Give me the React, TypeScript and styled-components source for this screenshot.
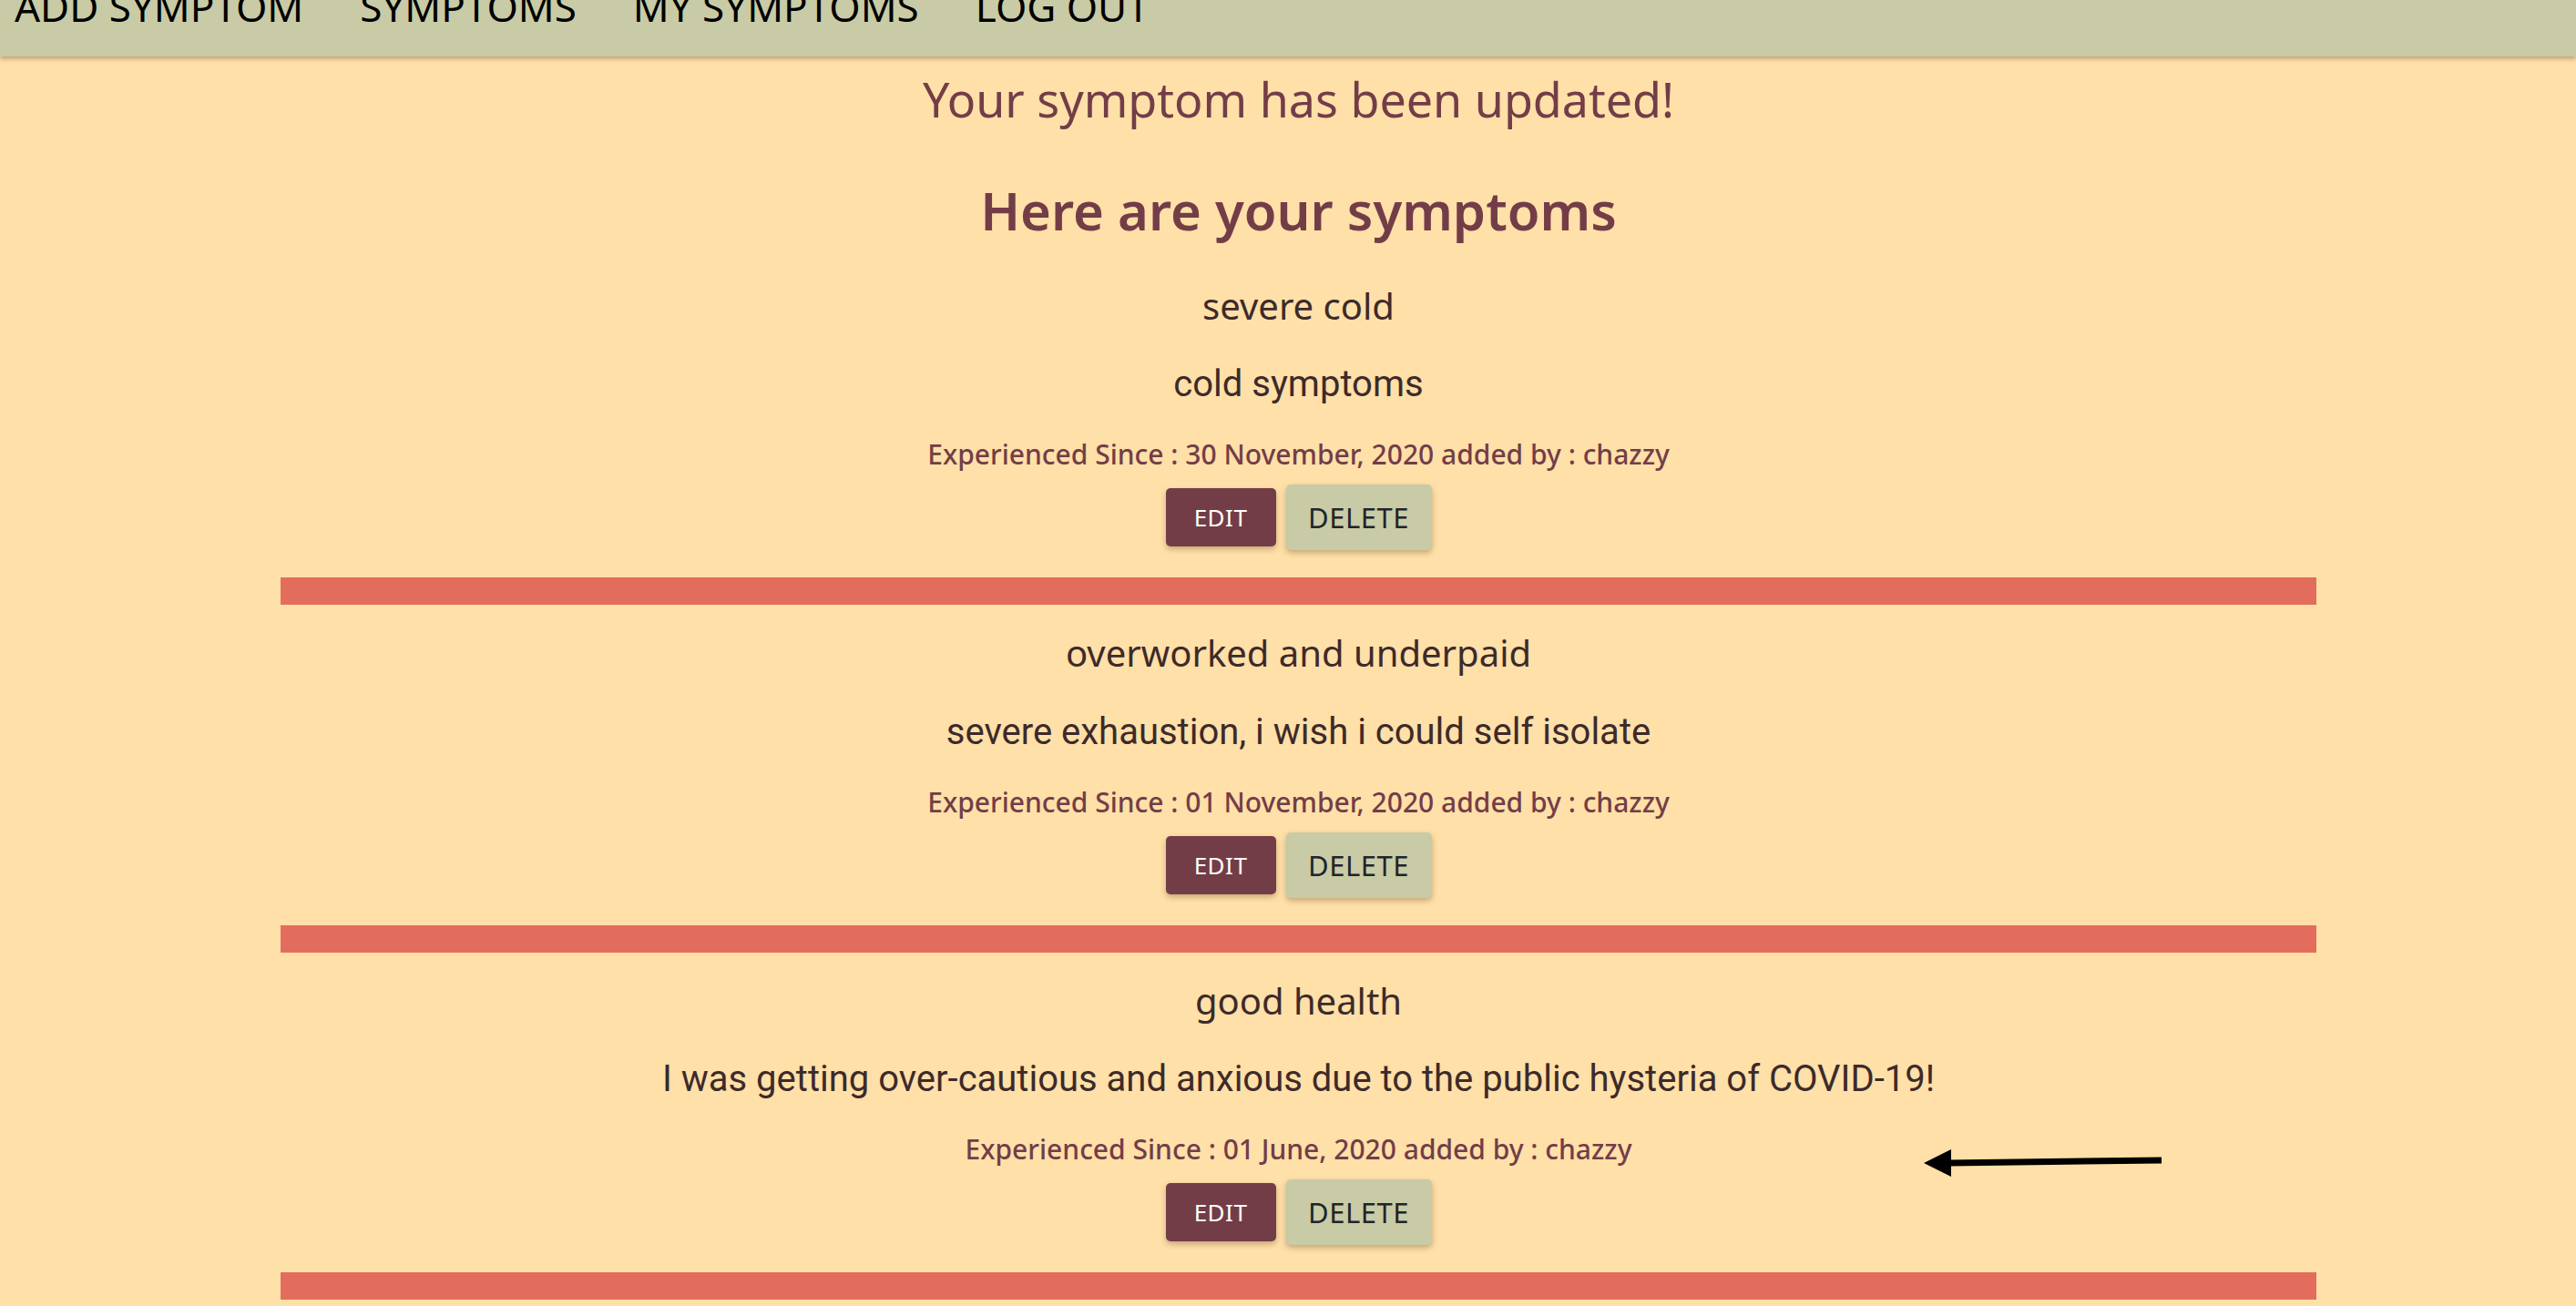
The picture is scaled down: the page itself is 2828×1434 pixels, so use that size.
import * as React from 'react';
import styled, { createGlobalStyle } from 'styled-components';

const HEADING_FONT = '"Noto Sans", "Open Sans", sans-serif';
const BODY_FONT = 'Roboto, "Noto Sans", sans-serif';

const colors = {
  page: '#FFE0A8',
  nav: '#C8CBA5',
  maroon: '#733D48',
  bar: '#E36D5D',
  ink: '#3D2A2A',
  dark: '#212529',
};

const GlobalStyle = createGlobalStyle`
  html, body {
    margin: 0;
    padding: 0;
    background: ${colors.page};
  }
  #root {
    min-height: 1434px;
    background: ${colors.page};
  }
`;

const Page = styled.div`
  position: relative;
  min-height: 1434px;
  overflow: hidden;
  background: ${colors.page};
`;

const NavBar = styled.nav`
  display: flex;
  align-items: flex-start;
  gap: 62px;
  height: 62px;
  padding-left: 16px;
  overflow: hidden;
  background: ${colors.nav};
  box-shadow: 0 3px 4px rgba(90, 70, 40, 0.35);
  position: relative;
  z-index: 1;
`;

const NavLink = styled.a`
  margin-top: -15px;
  font-family: ${HEADING_FONT};
  font-size: 44px;
  line-height: 44px;
  color: #000;
  text-transform: uppercase;
  text-decoration: none;
  white-space: nowrap;
`;

const Main = styled.main`
  display: flex;
  flex-direction: column;
  align-items: center;
  padding: 0 285px 0 308px;
  text-align: center;
`;

const Flash = styled.p`
  margin: 11px 0 0;
  font-family: ${HEADING_FONT};
  font-size: 52px;
  line-height: 72px;
  color: ${colors.maroon};
`;

const Heading = styled.h2`
  margin: 50px 0 0;
  font-family: ${HEADING_FONT};
  font-weight: 600;
  font-size: 58px;
  line-height: 72px;
  color: ${colors.maroon};
`;

const List = styled.section`
  display: flex;
  flex-direction: column;
  width: 100%;
  margin-top: 15.5px;
`;

const Item = styled.article`
  display: flex;
  flex-direction: column;
  align-items: center;
  padding-top: 29px;
`;

const ItemTitle = styled.h3`
  margin: 0;
  font-family: ${HEADING_FONT};
  font-weight: 400;
  font-size: 40px;
  line-height: 48px;
  color: ${colors.ink};
`;

const Description = styled.p`
  margin: 38.5px 0 0;
  font-family: ${BODY_FONT};
  font-size: 40px;
  line-height: 48px;
  color: ${colors.ink};
`;

const Meta = styled.p`
  margin: 33px 0 0;
  font-family: ${HEADING_FONT};
  font-weight: 500;
  font-size: 30px;
  line-height: 40px;
  color: ${colors.maroon};
`;

const Actions = styled.div`
  display: flex;
  align-items: center;
  gap: 11px;
  height: 72px;
  margin-top: 13px;
`;

const Button = styled.button<{ $variant: 'edit' | 'delete' }>`
  display: flex;
  align-items: center;
  justify-content: center;
  box-sizing: border-box;
  border: none;
  cursor: pointer;
  font-family: ${HEADING_FONT};
  text-transform: uppercase;
  border-radius: 5px;
  box-shadow: 0 3px 6px rgba(90, 60, 30, 0.35);
  width: ${({ $variant }) => ($variant === 'edit' ? '121px' : '160px')};
  height: ${({ $variant }) => ($variant === 'edit' ? '64px' : '72px')};
  font-size: ${({ $variant }) => ($variant === 'edit' ? '26px' : '31px')};
  letter-spacing: 0.5px;
  background: ${({ $variant }) => ($variant === 'edit' ? colors.maroon : colors.nav)};
  color: ${({ $variant }) => ($variant === 'edit' ? '#fff' : colors.dark)};
`;

const Divider = styled.hr`
  width: 100%;
  height: 30px;
  margin: 30px 0 0;
  border: none;
  background: ${colors.bar};
`;

const Arrow = styled.svg`
  position: absolute;
  left: 2105px;
  top: 1255px;
  width: 275px;
  height: 45px;
`;

interface Symptom {
  id: number;
  name: string;
  description: string;
  since: string;
  author: string;
}

const symptoms: Symptom[] = [
  {
    id: 1,
    name: 'severe cold',
    description: 'cold symptoms',
    since: '30 November, 2020',
    author: 'chazzy',
  },
  {
    id: 2,
    name: 'overworked and underpaid',
    description: 'severe exhaustion, i wish i could self isolate',
    since: '01 November, 2020',
    author: 'chazzy',
  },
  {
    id: 3,
    name: 'good health',
    description:
      'I was getting over-cautious and anxious due to the public hysteria of COVID-19!',
    since: '01 June, 2020',
    author: 'chazzy',
  },
];

function SymptomItem({ symptom }: { symptom: Symptom }) {
  return (
    <Item>
      <ItemTitle>{symptom.name}</ItemTitle>
      <Description>{symptom.description}</Description>
      <Meta>
        Experienced Since : {symptom.since} added by : {symptom.author}
      </Meta>
      <Actions>
        <Button $variant="edit">Edit</Button>
        <Button $variant="delete">Delete</Button>
      </Actions>
      <Divider />
    </Item>
  );
}

export default function App() {
  return (
    <Page>
      <GlobalStyle />
      <NavBar>
        <NavLink href="#">Add Symptom</NavLink>
        <NavLink href="#">Symptoms</NavLink>
        <NavLink href="#">My Symptoms</NavLink>
        <NavLink href="#">Log Out</NavLink>
      </NavBar>
      <Main>
        <Flash>Your symptom has been updated!</Flash>
        <Heading>Here are your symptoms</Heading>
        <List>
          {symptoms.map((s) => (
            <SymptomItem key={s.id} symptom={s} />
          ))}
        </List>
      </Main>
      <Arrow viewBox="0 0 275 45">
        <line x1="34" y1="22" x2="268" y2="19" stroke="#000" strokeWidth="7" />
        <polygon points="7,22 37,7 37,37" fill="#000" />
      </Arrow>
    </Page>
  );
}
